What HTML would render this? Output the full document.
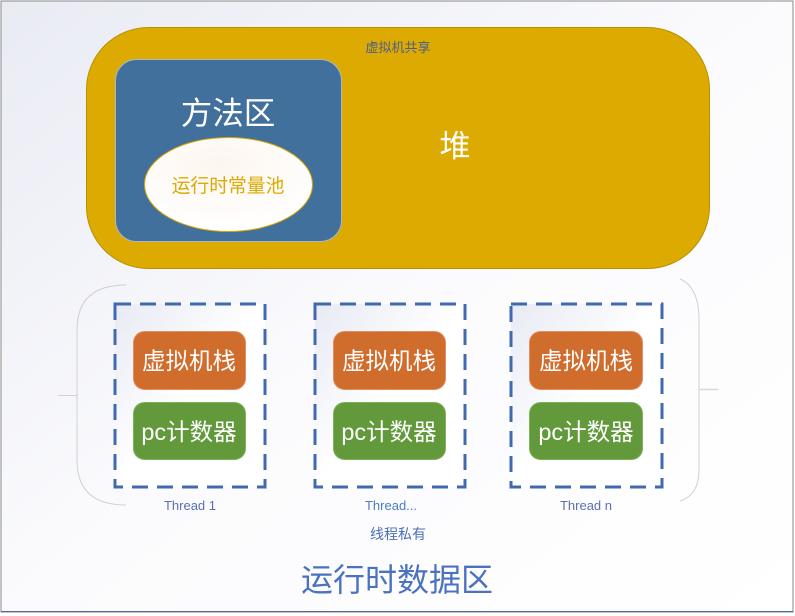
<!DOCTYPE html>
<html><head><meta charset="utf-8"><style>
html,body{margin:0;padding:0;width:795px;height:616px;overflow:hidden;background:#fff}
svg text{font-family:"Liberation Sans","Noto Sans CJK SC",sans-serif}
</style></head><body>
<svg width="795" height="616" viewBox="0 0 795 616" xmlns="http://www.w3.org/2000/svg">
<defs>
<linearGradient id="bg" x1="0" y1="0" x2="1" y2="1">
<stop offset="0" stop-color="#e9ebf4"/><stop offset="0.5" stop-color="#fbfbfd"/><stop offset="1" stop-color="#ffffff"/>
</linearGradient>
<linearGradient id="tb" x1="0" y1="0" x2="1" y2="1">
<stop offset="0" stop-color="#e8eaf4"/><stop offset="0.5" stop-color="#ffffff"/><stop offset="1" stop-color="#ffffff"/>
</linearGradient>
<radialGradient id="el" cx="0.45" cy="0.3" r="0.7">
<stop offset="0" stop-color="#fdf6ef"/><stop offset="1" stop-color="#ffffff"/>
</radialGradient>
</defs>
<rect x="1" y="1" width="792" height="611" fill="url(#bg)" stroke="#8a8a8a" stroke-width="1"/>
<line x1="1" y1="611.5" x2="793" y2="611.5" stroke="#4a6aa8" stroke-width="1"/>
<rect x="86.5" y="27.5" width="623" height="241" rx="62" fill="#dcaa00" stroke="#b89000"/>
<text x="398" y="52" font-size="13" fill="#4a5f8f" text-anchor="middle">虚拟机共享</text>
<text x="455" y="157" font-size="31" fill="#fff" text-anchor="middle">堆</text>
<rect x="115.5" y="59.5" width="226" height="182" rx="21" fill="#42709c" stroke="#a8b8c8"/>
<text x="228" y="124" font-size="31.5" fill="#fff" text-anchor="middle">方法区</text>
<ellipse cx="228.5" cy="184.5" rx="84" ry="47" fill="url(#el)" stroke="#d8a800"/>
<text x="228" y="192" font-size="18.8" fill="#dcaa00" text-anchor="middle">运行时常量池</text>
<path d="M126 285 Q77 285 77 330 L77 460 Q77 505 126 505" fill="none" stroke="#d0d0d0"/>
<line x1="58" y1="395.5" x2="77" y2="395.5" stroke="#d0d0d0"/>
<path d="M680 279 Q699 287 699 320 L699 470 Q699 495 680 501" fill="none" stroke="#d0d0d0"/>
<line x1="699" y1="389.5" x2="718" y2="389.5" stroke="#d8d8d8" stroke-width="1.5"/>
<g>
<rect x="115" y="304" width="150" height="183" fill="url(#tb)" stroke="#4169b0" stroke-width="3" stroke-dasharray="16 9"/>
<rect x="133.5" y="331.5" width="112" height="58" rx="11" fill="#d06c2c" stroke="#e09060"/>
<text x="189" y="369" font-size="23.5" fill="#fff" text-anchor="middle">虚拟机栈</text>
<rect x="133.5" y="402.5" width="112" height="57" rx="11" fill="#62993a" stroke="#80b060"/>
<text x="189" y="440" font-size="23.5" fill="#fff" text-anchor="middle">pc计数器</text>
<text x="190" y="510" font-size="13" fill="#5a6fb8" text-anchor="middle">Thread 1</text>
</g>
<g>
<rect x="315" y="304" width="150" height="183" fill="url(#tb)" stroke="#4169b0" stroke-width="3" stroke-dasharray="16 9"/>
<rect x="333.5" y="331.5" width="112" height="58" rx="11" fill="#d06c2c" stroke="#e09060"/>
<text x="389" y="369" font-size="23.5" fill="#fff" text-anchor="middle">虚拟机栈</text>
<rect x="333.5" y="402.5" width="112" height="57" rx="11" fill="#62993a" stroke="#80b060"/>
<text x="389" y="440" font-size="23.5" fill="#fff" text-anchor="middle">pc计数器</text>
<text x="391" y="510" font-size="13" fill="#4a7acc" text-anchor="middle">Thread...</text>
</g>
<g>
<rect x="511" y="304" width="151" height="183" fill="url(#tb)" stroke="#4169b0" stroke-width="3" stroke-dasharray="16 9"/>
<rect x="529.5" y="331.5" width="113" height="58" rx="11" fill="#d06c2c" stroke="#e09060"/>
<text x="586" y="369" font-size="23.5" fill="#fff" text-anchor="middle">虚拟机栈</text>
<rect x="529.5" y="402.5" width="113" height="57" rx="11" fill="#62993a" stroke="#80b060"/>
<text x="586" y="440" font-size="23.5" fill="#fff" text-anchor="middle">pc计数器</text>
<text x="586" y="510" font-size="13" fill="#5a6fb8" text-anchor="middle">Thread n</text>
</g>
<text x="398" y="539" font-size="14" fill="#4a6fb8" text-anchor="middle">线程私有</text>
<text x="397" y="591" font-size="32" fill="#4a72c0" text-anchor="middle">运行时数据区</text>
</svg>
</body></html>
